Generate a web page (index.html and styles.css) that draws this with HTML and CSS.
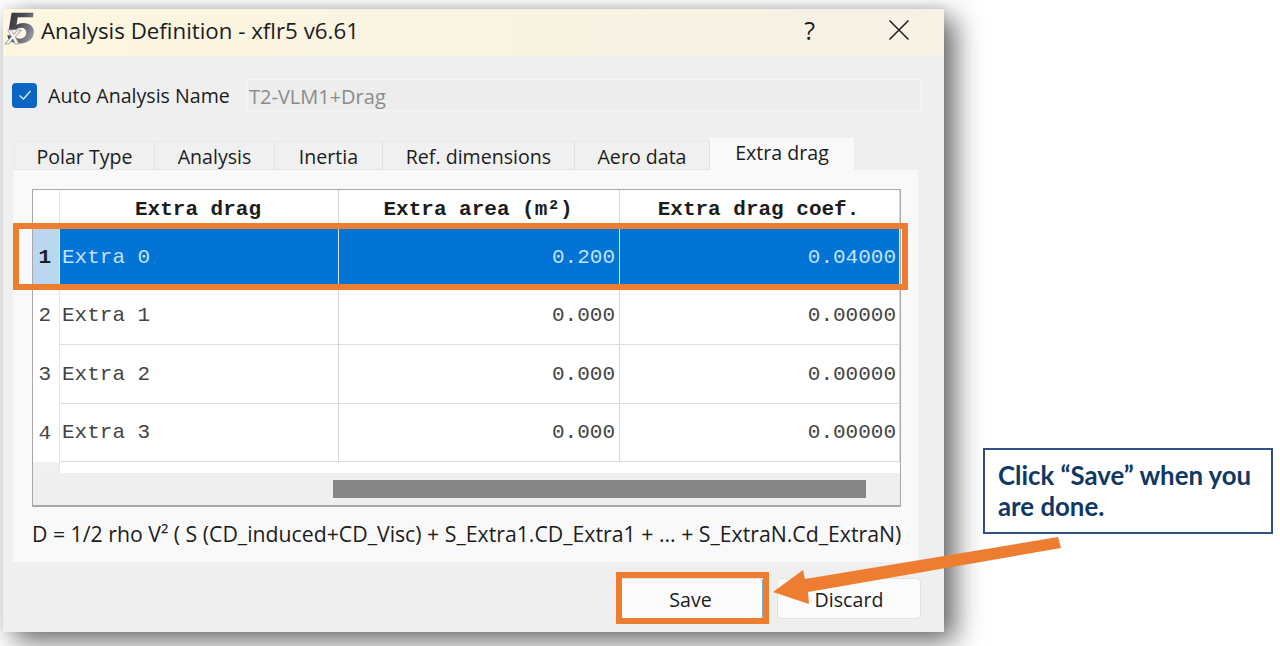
FILE: index.html
```html
<!DOCTYPE html>
<html lang="en">
<head>
    <meta charset="UTF-8">
    <meta name="viewport" content="width=device-width, initial-scale=1.0">
    <title>Analysis Definition - xflr5 v6.61</title>
    <link rel="stylesheet" href="styles.css">
</head>
<body>
    <div class="window">
        <!-- Title bar -->
        <header class="titlebar">
            <svg class="logo" width="38" height="47" viewBox="0 0 38 47">
                <defs>
                    <linearGradient id="five" x1="0" y1="0" x2="1" y2="0.7">
                        <stop offset="0" stop-color="#2a2a32"/>
                        <stop offset="0.5" stop-color="#4c4c58"/>
                        <stop offset="1" stop-color="#a4a4ae"/>
                    </linearGradient>
                </defs>
                <text class="logo-five" x="0" y="34" transform="translate(5 0) skewX(-5) scale(1.2 1)" fill="url(#five)">5</text>
                <text class="logo-x" x="3" y="35">x</text>
            </svg>
            <span class="title">Analysis Definition - xflr5 v6.61</span>
            <span class="help">?</span>
            <svg class="close" width="22" height="22" viewBox="0 0 22 22">
                <path d="M1.5 1.5 L20.5 20.5 M20.5 1.5 L1.5 20.5" stroke="#222" stroke-width="1.6" fill="none"/>
            </svg>
        </header>

        <div class="name-row">
            <span class="checkbox">
                <svg width="14" height="12" viewBox="0 0 14 12">
                    <path d="M1.5 6.5 L5.5 10 L12.5 2" stroke="#dcebf9" stroke-width="1.4" fill="none"/>
                </svg>
            </span>
            <span class="name-label">Auto Analysis Name</span>
            <div class="name-input">T2-VLM1+Drag</div>
        </div>

        <!-- Tabs -->
        <nav class="tabs">
            <a class="tab tab-polar">Polar Type</a>
            <a class="tab tab-analysis">Analysis</a>
            <a class="tab tab-inertia">Inertia</a>
            <a class="tab tab-ref">Ref. dimensions</a>
            <a class="tab tab-aero">Aero data</a>
            <a class="tab tab-extra active">Extra drag</a>
        </nav>

        <section class="panel">
            <div class="table-frame">
                <div class="grid">
                    <div class="corner"></div>
                    <div class="head">Extra drag</div>
                    <div class="head">Extra area (m²)</div>
                    <div class="head">Extra drag coef.</div>

                    <div class="rowhead selected">1</div>
                    <div class="cell sel">Extra 0</div>
                    <div class="cell sel num area">0.200</div>
                    <div class="cell sel num">0.04000</div>

                    <div class="rowhead">2</div>
                    <div class="cell">Extra 1</div>
                    <div class="cell num area">0.000</div>
                    <div class="cell num">0.00000</div>

                    <div class="rowhead">3</div>
                    <div class="cell">Extra 2</div>
                    <div class="cell num area">0.000</div>
                    <div class="cell num">0.00000</div>

                    <div class="rowhead">4</div>
                    <div class="cell">Extra 3</div>
                    <div class="cell num area">0.000</div>
                    <div class="cell num">0.00000</div>

                    <div class="stub"></div>
                </div>
                <div class="scrollbar">
                    <div class="thumb"></div>
                </div>
            </div>
            <p class="formula">D = 1/2 rho V² ( S (CD_induced+CD_Visc) + S_Extra1.CD_Extra1 + ... + S_ExtraN.Cd_ExtraN)</p>
        </section>

        <div class="buttons">
            <button class="btn btn-save">Save</button>
            <button class="btn btn-discard">Discard</button>
        </div>
    </div>

    <!-- Annotations on top of the screenshot -->
    <div class="mark mark-row"></div>
    <div class="mark mark-save"></div>
    <svg class="arrow" width="300" height="80" viewBox="0 0 300 80">
        <polygon fill="#ed7d31" points="285,0 288,11 35,55 36,67 0,55 30,33 32,42"/>
    </svg>
    <div class="callout">Click “Save” when you are done.</div>
</body>
</html>
```

FILE: styles.css
```css
html, body {
    margin: 0;
    padding: 0;
    height: 646px;
    overflow: hidden;
    background: #fff;
    font-family: "Open Sans", sans-serif;
    color: #1c1c1c;
}
body {
    position: relative;
}

.window {
    position: absolute;
    left: 3px;
    top: 9px;
    width: 941px;
    height: 623px;
    background: #efefef;
    box-shadow: 11px 9px 26px rgba(0, 0, 0, 0.6), 0 -2px 8px rgba(0, 0, 0, 0.08);
}

/* title bar */
.titlebar {
    height: 47px;
    display: flex;
    align-items: center;
    background: linear-gradient(to right, #fdf6e0, #f7f1e6);
}
.logo {
    flex: none;
    overflow: visible;
}
.logo-five {
    font-family: "Liberation Sans", sans-serif;
    font-weight: bold;
    font-size: 44px;
}
.logo-x {
    font-family: "Liberation Sans", sans-serif;
    font-weight: bold;
    font-style: italic;
    font-size: 26px;
    fill: #f8f8f8;
    stroke: #777;
    stroke-width: 0.5px;
}
.title {
    margin-bottom: 5px;
    font-size: 22.3px;
    white-space: nowrap;
}
.help {
    margin-left: auto;
    margin-right: 73px;
    margin-bottom: 6px;
    font-size: 25px;
}
.close {
    margin-right: 34px;
    margin-bottom: 5px;
}

/* name row */
.name-row {
    display: flex;
    align-items: center;
    margin-top: 23px;
    height: 32px;
    padding-left: 9px;
}
.checkbox {
    width: 25px;
    height: 25px;
    border-radius: 4px;
    background: #0a66c2;
    display: flex;
    align-items: center;
    justify-content: center;
}
.name-label {
    margin-left: 11px;
    font-size: 19.6px;
    white-space: nowrap;
    width: 199px;
}
.name-input {
    box-sizing: border-box;
    width: 674px;
    height: 32px;
    line-height: 34px;
    background: #ededed;
    border: 1px solid #f5f5f5;
    padding-left: 1px;
    font-size: 20px;
    color: #8b8b8b;
}

/* tabs */
.tabs {
    display: flex;
    align-items: flex-end;
    height: 32px;
    margin-top: 27px;
    padding-left: 11px;
}
.tab {
    box-sizing: border-box;
    height: 29px;
    line-height: 30px;
    text-align: center;
    font-size: 19.6px;
    white-space: nowrap;
    background: #f0f0f0;
    border-top: 1px solid #e8e8e8;
    border-right: 1px solid #e2e2e2;
    border-bottom: 1px solid #e4e4e4;
}
.tab-polar { width: 141px; border-left: 1px solid #e8e8e8; }
.tab-analysis { width: 120px; }
.tab-inertia { width: 108px; }
.tab-ref { width: 192px; }
.tab-aero { width: 135px; }
.tab-extra { width: 144px; }
.tab.active {
    height: 32px;
    line-height: 30px;
    background: #f9f9f9;
    border: none;
}

/* panel with the table */
.panel {
    box-sizing: border-box;
    margin-left: 10px;
    width: 906px;
    height: 392px;
    padding: 19px 0 0 19px;
    background: #f9f9f9;
    border-right: 1px solid #f2f2f2;
}
.table-frame {
    box-sizing: border-box;
    width: 869px;
    height: 318px;
    background: #efefef;
    border: 1px solid #a8a8a8;
    border-bottom-width: 2px;
}
.grid {
    display: grid;
    grid-template-columns: 27px 279px 281px 280px;
    grid-template-rows: 39px 57px 59px 59px 58px 11px;
    background: #fff;
    font-family: "Liberation Mono", monospace;
    font-size: 21px;
    color: #444;
}
.head {
    display: flex;
    align-items: center;
    justify-content: center;
    padding-right: 2px;
    font-weight: bold;
    color: #1c1c1c;
    border-right: 1px solid #d8d8d8;
}
.corner {
    border-right: 1px solid #e6e6e6;
}
.rowhead {
    display: flex;
    align-items: center;
    justify-content: flex-end;
    padding-right: 8px;
    border-right: 1px solid #e6e6e6;
}
.rowhead.selected {
    background: #b9d7f1;
    font-weight: bold;
    color: #1c1c1c;
}
.cell {
    display: flex;
    align-items: center;
    padding-left: 2px;
    border-right: 1px solid #d8d8d8;
    border-bottom: 1px solid #dedede;
}
.cell.num {
    justify-content: flex-end;
    padding: 0 3px 0 0;
}
.cell.area {
    padding-right: 4px;
}
.cell.sel {
    background: #0274d6;
    color: #c3e2fb;
    border-bottom: none;
    border-right-color: #d5e6f5;
}
.stub {
    background: #f0f0f0;
    border-right: 1px solid #e6e6e6;
}
.scrollbar {
    padding: 7px 0 0 300px;
}
.thumb {
    width: 533px;
    height: 18px;
    background: #868686;
}
.formula {
    margin: 14px 0 0 0;
    font-size: 21.25px;
    line-height: 26px;
    white-space: nowrap;
}

/* buttons */
.buttons {
    display: flex;
    padding: 16px 0 0 615px;
    gap: 14px;
}
.btn {
    box-sizing: border-box;
    height: 41px;
    padding-top: 3px;
    font-family: "Open Sans", sans-serif;
    font-size: 19.6px;
    color: #1c1c1c;
    background: #fbfbfb;
    border: 1px solid #e2e2e2;
    border-radius: 4px;
}
.btn-save {
    width: 145px;
    border-right-color: #7fa6cc;
}
.btn-discard { width: 144px; }

/* annotations */
.mark {
    position: absolute;
    box-sizing: border-box;
    border: 6px solid #ed7d31;
}
.mark-row {
    left: 13px;
    top: 223px;
    width: 895px;
    height: 67px;
}
.mark-save {
    left: 616px;
    top: 572px;
    width: 153px;
    height: 52px;
}
.arrow {
    position: absolute;
    left: 773px;
    top: 537px;
}
.callout {
    position: absolute;
    box-sizing: border-box;
    left: 983px;
    top: 448px;
    width: 290px;
    height: 86px;
    padding: 10px 10px 0 13px;
    background: #fff;
    border: 2px solid #2f5080;
    font-family: "Lato", sans-serif;
    font-weight: bold;
    font-size: 25.8px;
    line-height: 31px;
    color: #0f3864;
}
```
